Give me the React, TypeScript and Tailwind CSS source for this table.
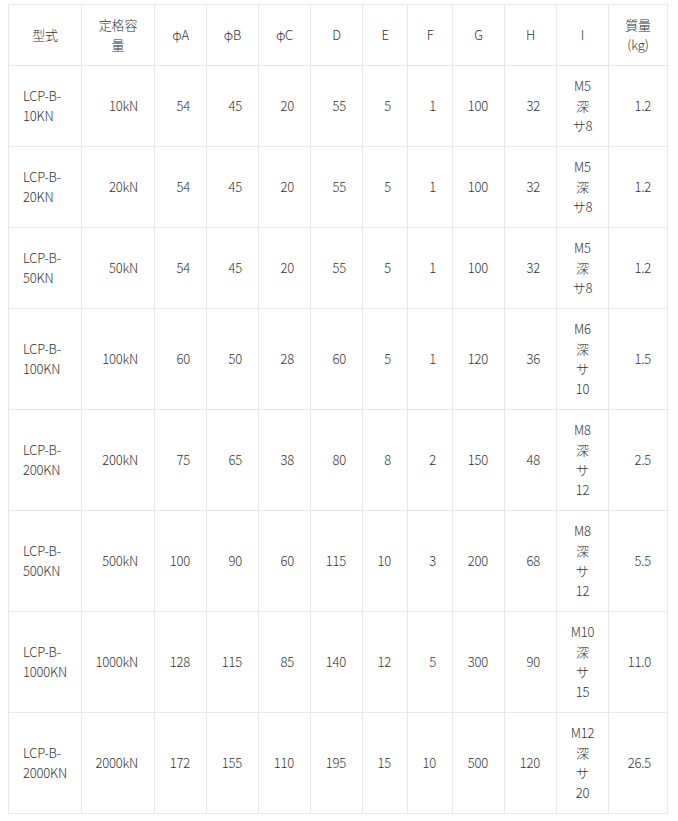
const headers: string[][] = [
  ['型式'],
  ['定格容', '量'],
  ['φA'],
  ['φB'],
  ['φC'],
  ['D'],
  ['E'],
  ['F'],
  ['G'],
  ['H'],
  ['I'],
  ['質量', '(kg)'],
];

type Row = {
  model: string;
  cap: string;
  nums: string[];
  hole: string[];
  mass: string;
};

const rows: Row[] = [
  { model: '10KN', cap: '10kN', nums: ['54', '45', '20', '55', '5', '1', '100', '32'], hole: ['M5', '深', 'サ8'], mass: '1.2' },
  { model: '20KN', cap: '20kN', nums: ['54', '45', '20', '55', '5', '1', '100', '32'], hole: ['M5', '深', 'サ8'], mass: '1.2' },
  { model: '50KN', cap: '50kN', nums: ['54', '45', '20', '55', '5', '1', '100', '32'], hole: ['M5', '深', 'サ8'], mass: '1.2' },
  { model: '100KN', cap: '100kN', nums: ['60', '50', '28', '60', '5', '1', '120', '36'], hole: ['M6', '深', 'サ', '10'], mass: '1.5' },
  { model: '200KN', cap: '200kN', nums: ['75', '65', '38', '80', '8', '2', '150', '48'], hole: ['M8', '深', 'サ', '12'], mass: '2.5' },
  { model: '500KN', cap: '500kN', nums: ['100', '90', '60', '115', '10', '3', '200', '68'], hole: ['M8', '深', 'サ', '12'], mass: '5.5' },
  { model: '1000KN', cap: '1000kN', nums: ['128', '115', '85', '140', '12', '5', '300', '90'], hole: ['M10', '深', 'サ', '15'], mass: '11.0' },
  { model: '2000KN', cap: '2000kN', nums: ['172', '155', '110', '195', '15', '10', '500', '120'], hole: ['M12', '深', 'サ', '20'], mass: '26.5' },
];

function Lines({ lines }: { lines: string[] }) {
  return (
    <div>
      {lines.map((l, i) => (
        <div key={i}>{l}</div>
      ))}
    </div>
  );
}

export default function App() {
  return (
    <div
      className="min-h-[821px] bg-white pl-[8px] pt-[4px] text-[13px] font-light leading-[20px] tracking-[-0.2px] text-[#333]"
      style={{ fontFamily: '"Noto Sans CJK JP", "Noto Sans", sans-serif' }}
    >
      <div className="grid w-[660px] grid-cols-[72px_72px_51px_51px_51px_51px_44px_44px_51px_51px_51px_58px] gap-px bg-[#e8e8e8] p-px">
        {/* header */}
        {headers.map((h, i) => (
          <div key={i} className="flex h-[60px] items-center justify-center bg-white text-center">
            <Lines lines={h} />
          </div>
        ))}

        {rows.map((r) => {
          const tall = r.hole.length > 3;
          const h = tall ? 'h-[100px]' : 'h-[80px]';
          return [
            <div key={r.model + 'm'} className={`flex ${h} items-center bg-white pl-[14px]`}>
              <Lines lines={['LCP-B-', r.model]} />
            </div>,
            <div key={r.model + 'c'} className={`flex ${h} items-center justify-end bg-white pr-[16px]`}>
              {r.cap}
            </div>,
            ...r.nums.map((n, i) => (
              <div key={r.model + 'n' + i} className={`flex ${h} items-center justify-end bg-white pr-[16px]`}>
                {n}
              </div>
            )),
            <div key={r.model + 'h'} className={`flex ${h} items-center justify-center bg-white text-center`}>
              <Lines lines={r.hole} />
            </div>,
            <div key={r.model + 'w'} className={`flex ${h} items-center justify-end bg-white pr-[16px]`}>
              {r.mass}
            </div>,
          ];
        })}
      </div>
    </div>
  );
}
